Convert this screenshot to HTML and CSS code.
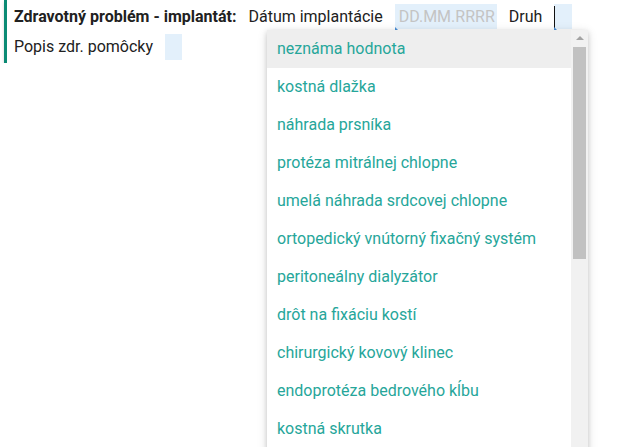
FILE: index.html
```html
<!DOCTYPE html>
<html lang="sk">
<head>
<meta charset="utf-8">
<link rel="stylesheet" href="styles.css">
</head>
<body>
<div class="panel">
  <div class="row">
    <span class="title">Zdravotný problém - implantát:</span>
    <span class="lbl">Dátum implantácie</span>
    <span class="inp date">DD.MM.RRRR</span>
    <span class="lbl">Druh</span>
    <span class="inp sel"></span>
  </div>
  <div class="row">
    <span class="lbl">Popis zdr. pomôcky</span>
    <span class="inp popis"></span>
  </div>
</div>
<div class="dropdown">
  <ul class="list">
    <li class="active">neznáma hodnota</li>
    <li>kostná dlažka</li>
    <li>náhrada prsníka</li>
    <li>protéza mitrálnej chlopne</li>
    <li>umelá náhrada srdcovej chlopne</li>
    <li>ortopedický vnútorný fixačný systém</li>
    <li>peritoneálny dialyzátor</li>
    <li>drôt na fixáciu kostí</li>
    <li>chirurgický kovový klinec</li>
    <li>endoprotéza bedrového kĺbu</li>
    <li>kostná skrutka</li>
  </ul>
  <div class="scrollbar">
    <div class="arrow"></div>
    <div class="thumb"></div>
  </div>
</div>
</body>
</html>
```
FILE: styles.css
```css
html, body {
  margin: 0;
  padding: 0;
  background: #fff;
  font-family: Roboto, "Noto Sans", sans-serif;
  font-size: 16px;
  color: #212121;
}
.panel {
  margin-left: 4px;
  height: 63px;
  border-left: 3px solid #0b8a74;
  box-shadow: 0 2px 3px rgba(0,0,0,0.18);
  padding-left: 7px;
  box-sizing: border-box;
  display: flex;
  flex-direction: column;
  padding-top: 4px;
  row-gap: 5px;
}
.row {
  display: flex;
  align-items: center;
  column-gap: 12px;
  height: 25px;
}
.title {
  font-weight: bold;
}
.lbl { line-height: 25px; }
.inp {
  position: relative;
  height: 25px;
  background: #e3f0fb;
  box-sizing: border-box;
  line-height: 25px;
}
.date {
  width: 102px;
  padding-left: 4px;
  color: #c4c4c4;
}
.sel { width: 18px; }
.popis { width: 17px; height: 26px; }
.date::after, .sel::after {
  content: "";
  position: absolute;
  left: 0;
  bottom: -1px;
  border-left: 3px solid #4a90d9;
  border-top: 3px solid transparent;
}
.sel::before {
  content: "";
  position: absolute;
  left: 0;
  top: 2px;
  width: 1px;
  height: 22px;
  background: #111;
}
.dropdown {
  position: absolute;
  left: 267px;
  top: 30px;
  width: 321px;
  height: 430px;
  background: #fff;
  display: flex;
  box-shadow: 0 2px 5px rgba(0,0,0,0.16), 0 2px 10px rgba(0,0,0,0.12);
  overflow: hidden;
}
.list {
  list-style: none;
  margin: 0;
  padding: 0;
  flex: 1;
}
.list li {
  height: 38px;
  line-height: 37px;
  padding-left: 10px;
  color: #26a69a;
  white-space: nowrap;
}
.list li.active { background: #eeeeee; }
.scrollbar {
  width: 17px;
  background: #f1f1f1;
  display: flex;
  flex-direction: column;
  align-items: center;
}
.arrow {
  margin-top: 6px;
  width: 0;
  height: 0;
  border-left: 4px solid transparent;
  border-right: 4px solid transparent;
  border-bottom: 4px solid #a3a3a3;
}
.thumb {
  margin-top: 7px;
  width: 13px;
  height: 212px;
  background: #c1c1c1;
}
```
